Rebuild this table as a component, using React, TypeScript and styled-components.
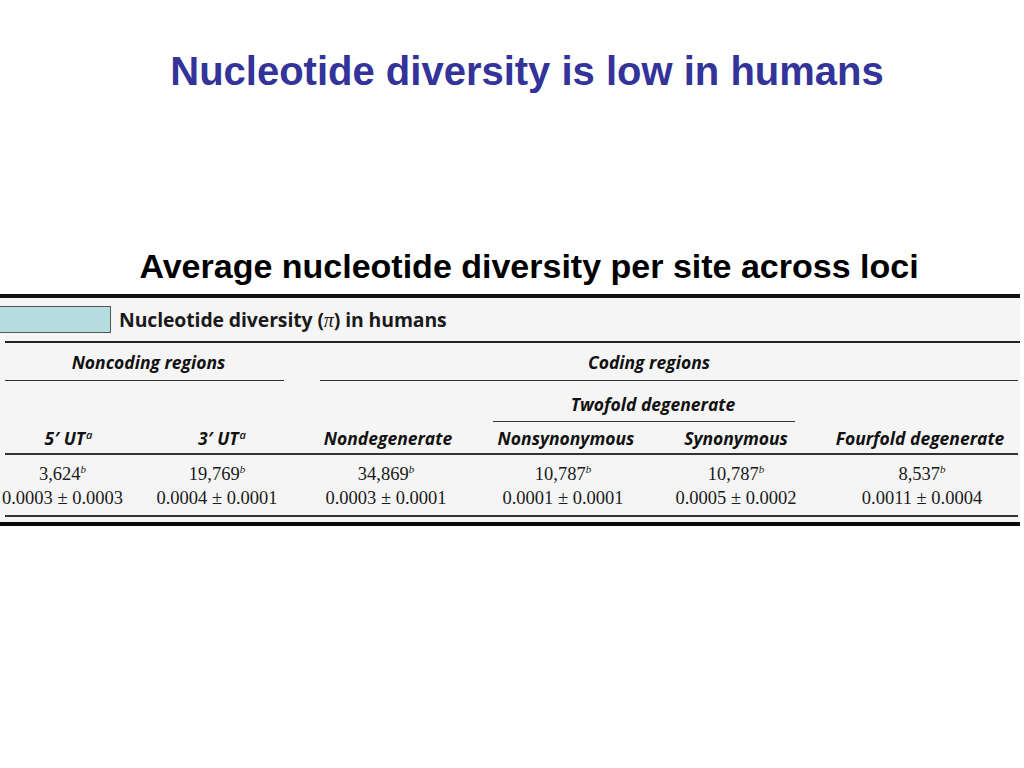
import React from "react";
import styled, { createGlobalStyle } from "styled-components";

const Global = createGlobalStyle`
  html, body { margin: 0; padding: 0; background: #ffffff; }
  body { width: 1024px; height: 768px; overflow: hidden; }
`;

const Page = styled.div`
  width: 1024px;
  height: 768px;
  display: flex;
  flex-direction: column;
  align-items: center;
  background: #ffffff;
`;

const Title = styled.h1`
  margin: 48px 0 0 0;
  font-family: "Liberation Sans", Arial, sans-serif;
  font-weight: 700;
  font-size: 40px;
  line-height: 46px;
  color: #333399;
  text-align: center;
  padding-left: 30px;
  white-space: nowrap;
`;

const Subtitle = styled.h2`
  margin: 152px 0 0 0;
  font-family: "Liberation Sans", Arial, sans-serif;
  font-weight: 700;
  font-size: 34px;
  line-height: 40px;
  color: #000000;
  text-align: center;
  padding-left: 34px;
  white-space: nowrap;
`;

const TableFig = styled.div`
  align-self: flex-start;
  margin-top: 8px;
  width: 1020px;
  background: #f5f5f5;
  border-top: 4px solid #111;
  display: flex;
  flex-direction: column;
`;

const Caption = styled.div`
  display: flex;
  align-items: center;
  gap: 8px;
  margin-top: 8px;
  height: 27px;
`;

const Swatch = styled.div`
  width: 110px;
  height: 25px;
  background: #b5dde0;
  border: 1px solid #555;
  border-left: none;
`;

const CaptionText = styled.span`
  font-family: "Open Sans", "Noto Sans", sans-serif;
  font-weight: 700;
  font-size: 19.4px;
  color: #1a1a1a;
  letter-spacing: -0.1px;
`;

const Pi = styled.span`
  font-family: "Liberation Serif", serif;
  font-style: italic;
  font-weight: 400;
  font-size: 20px;
`;

const Grid = styled.div`
  display: grid;
  grid-template-columns: 135px 144px 206px 152px 190px 186px;
  margin-top: 8px;
  border-top: 2px solid #222;
  margin-left: 5px;
`;

const headFont = `
  font-family: "Open Sans", "Noto Sans", sans-serif;
  font-style: italic;
  font-weight: 700;
  font-size: 17.5px;
  color: #111;
  white-space: nowrap;
`;

const Head = styled.div<{ $col: string; $pl?: number; $pr?: number; $h: number; $pt?: number; $shift?: number }>`
  grid-column: ${(p) => p.$col};
  height: ${(p) => p.$h}px;
  display: flex;
  align-items: center;
  justify-content: center;
  padding-left: ${(p) => p.$pl ?? 0}px;
  padding-right: ${(p) => p.$pr ?? 0}px;
  padding-top: ${(p) => p.$pt ?? 0}px;
  box-sizing: border-box;
  position: relative;
  ${headFont}
  &::after {
    content: "";
    position: absolute;
    bottom: 0;
    left: ${(p) => p.$pl ?? 0}px;
    right: ${(p) => p.$pr ?? 0}px;
    border-bottom: 1.5px solid #333;
  }
  & > span { transform: translateX(${(p) => p.$shift ?? 0}px); }
`;

const ColHeadRow = styled.div`
  grid-column: 1 / 7;
  display: grid;
  grid-template-columns: subgrid;
  border-bottom: 2px solid #333;
  height: 31px;
  align-items: center;
`;

const ColHead = styled.div<{ $shift?: number }>`
  text-align: center;
  ${headFont}
  transform: translateX(${(p) => p.$shift ?? 0}px);
`;

const SupA = styled.sup`
  font-size: 11px;
  font-weight: 600;
  vertical-align: 6px;
  line-height: 0;
  margin-left: 1px;
`;

const DataRow = styled.div`
  grid-column: 1 / 7;
  display: grid;
  grid-template-columns: subgrid;
  border-bottom: 2px solid #333;
  padding: 7px 0 5px;
`;

const Cell = styled.div<{ $shift?: number }>`
  display: flex;
  flex-direction: column;
  align-items: center;
  font-family: "Liberation Serif", "Times New Roman", serif;
  font-size: 18.5px;
  line-height: 24px;
  color: #1a1a1a;
  white-space: nowrap;
  transform: translateX(${(p) => p.$shift ?? 0}px);
`;

const SupB = styled.sup`
  font-style: italic;
  font-size: 11px;
  vertical-align: 7px;
  line-height: 0;
`;

const BottomRule = styled.div`
  margin-top: 5px;
  height: 4px;
  background: #0a0a0a;
`;

const headers: { label: string; sup?: boolean; shift?: number }[] = [
  { label: "5′ UT", sup: true, shift: -4 },
  { label: "3′ UT", sup: true, shift: 10 },
  { label: "Nondegenerate", shift: 1 },
  { label: "Nonsynonymous", shift: 0 },
  { label: "Synonymous", shift: -1 },
  { label: "Fourfold degenerate", shift: -5 },
];

const data: { n: string; v: string; shift?: number }[] = [
  { n: "3,624", v: "0.0003 ± 0.0003", shift: -10 },
  { n: "19,769", v: "0.0004 ± 0.0001", shift: 5 },
  { n: "34,869", v: "0.0003 ± 0.0001", shift: -1 },
  { n: "10,787", v: "0.0001 ± 0.0001", shift: -3 },
  { n: "10,787", v: "0.0005 ± 0.0002", shift: -1 },
  { n: "8,537", v: "0.0011 ± 0.0004", shift: -3 },
];

export default function App() {
  return (
    <>
      <Global />
      <Page>
        <Title>Nucleotide diversity is low in humans</Title>
        <Subtitle>Average nucleotide diversity per site across loci</Subtitle>
        <TableFig>
          <Caption>
            <Swatch />
            <CaptionText>
              Nucleotide diversity (<Pi>π</Pi>) in humans
            </CaptionText>
          </Caption>
          <Grid>
            <Head $col="1 / 3" $h={38} $shift={4}>
              <span>Noncoding regions</span>
            </Head>
            <Head $col="3 / 7" $h={38} $pl={36} $shift={-20}>
              <span>Coding regions</span>
            </Head>
            <Head $col="4 / 6" $h={41} $pl={3} $pr={37} $pt={4} $shift={9}>
              <span>Twofold degenerate</span>
            </Head>
            <ColHeadRow>
              {headers.map((h, i) => (
                <ColHead key={i} $shift={h.shift}>
                  {h.label}
                  {h.sup && <SupA>a</SupA>}
                </ColHead>
              ))}
            </ColHeadRow>
            <DataRow>
              {data.map((d, i) => (
                <Cell key={i} $shift={d.shift}>
                  <span>
                    {d.n}
                    <SupB>b</SupB>
                  </span>
                  <span>{d.v}</span>
                </Cell>
              ))}
            </DataRow>
          </Grid>
          <BottomRule />
        </TableFig>
      </Page>
    </>
  );
}
